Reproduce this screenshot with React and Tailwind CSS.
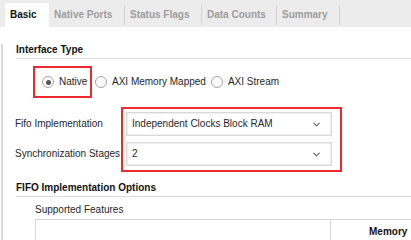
import { ChevronDown } from "lucide-react";

const tabs = [
  { label: "Basic", w: "w-[44px]", active: true },
  { label: "Native Ports", w: "w-[75px]" },
  { label: "Status Flags", w: "w-[76px]", sep: true },
  { label: "Data Counts", w: "w-[74px]", sep: true },
  { label: "Summary", w: "w-[62px]", sep: true, last: true },
];

const Radio = ({ checked, label }) => (
  <div className="flex items-center gap-[5px]">
    <span className="w-[12px] h-[12px] rounded-full border border-[#a5a5a5] bg-[#fafafa] flex items-center justify-center">
      {checked && <span className="w-[5px] h-[5px] rounded-full bg-[#555]" />}
    </span>
    <span>{label}</span>
  </div>
);

const Select = ({ value }) => (
  <div className="w-[206px] h-[24px] border border-[#d9d9d9] shadow-[inset_0_0_0_1px_#f0f0f0] bg-white flex items-center justify-between pl-[5px] pr-[9px]">
    <span>{value}</span>
    <ChevronDown size={11} strokeWidth={2.5} className="text-[#666]" />
  </div>
);

export default function App() {
  return (
    <div className="w-[411px] h-[240px] overflow-hidden bg-white text-[10px] leading-[12px] text-[#262626] font-['Liberation_Sans',Arial,sans-serif]">
      <div className="flex items-end h-[27px] bg-[#ececec] pl-[5px]">
        {tabs.map((t) => (
          <div key={t.label} className="flex items-center h-[24px]">
            {t.sep && <span className="w-px h-[19px] bg-[#d2d2d2]" />}
            <div
              className={`${t.w} h-[24px] flex items-center pl-[5px] font-bold ${
                t.active ? "bg-white text-[#111]" : "text-[#9d9d9d]"
              }`}
            >
              {t.label}
            </div>
            {t.last && <span className="w-px h-[19px] bg-[#d2d2d2]" />}
          </div>
        ))}
      </div>

      <div className="h-[213px] ml-[1px] border-l-2 border-[#dadada]">
        <div className="ml-[13px] mt-[17px] pb-[2px] border-b border-[#dcdcdc] font-bold text-[#111]">
          Interface Type
        </div>

        <div className="flex items-center mt-[7px] ml-[30px] gap-[3px]">
          <div className="h-[32px] w-[59px] border-2 border-[#ea2a2f] flex items-center pl-[7px]">
            <Radio checked label="Native" />
          </div>
          <Radio label="AXI Memory Mapped" />
          <div className="ml-[2px]">
            <Radio label="AXI Stream" />
          </div>
        </div>

        <div className="flex mt-[9px]">
          <div className="w-[118px] shrink-0 pl-[12px] pt-[5px] flex flex-col gap-[6px]">
            <div className="h-[24px] flex items-center">Fifo Implementation</div>
            <div className="h-[24px] flex items-center whitespace-nowrap">Synchronization Stages</div>
          </div>
          <div className="border-2 border-[#ea2a2f] pt-[3px] pl-[3px] pr-[8px] pb-[4px] flex flex-col gap-[6px]">
            <Select value="Independent Clocks Block RAM" />
            <Select value="2" />
          </div>
        </div>

        <div className="ml-[13px] mt-[10px] pb-[2px] border-b border-[#dcdcdc] font-bold text-[#111]">
          FIFO Implementation Options
        </div>

        <div className="ml-[32px] mt-[7px]">Supported Features</div>

        <div className="ml-[32px] mt-[3px] flex border-t border-l border-[#d6d6d6] h-[40px]">
          <div className="w-[295px] border-r border-[#d6d6d6]" />
          <div className="pl-[38px] pt-[6px] font-bold text-[#111] whitespace-nowrap">Memory</div>
        </div>
      </div>
    </div>
  );
}
